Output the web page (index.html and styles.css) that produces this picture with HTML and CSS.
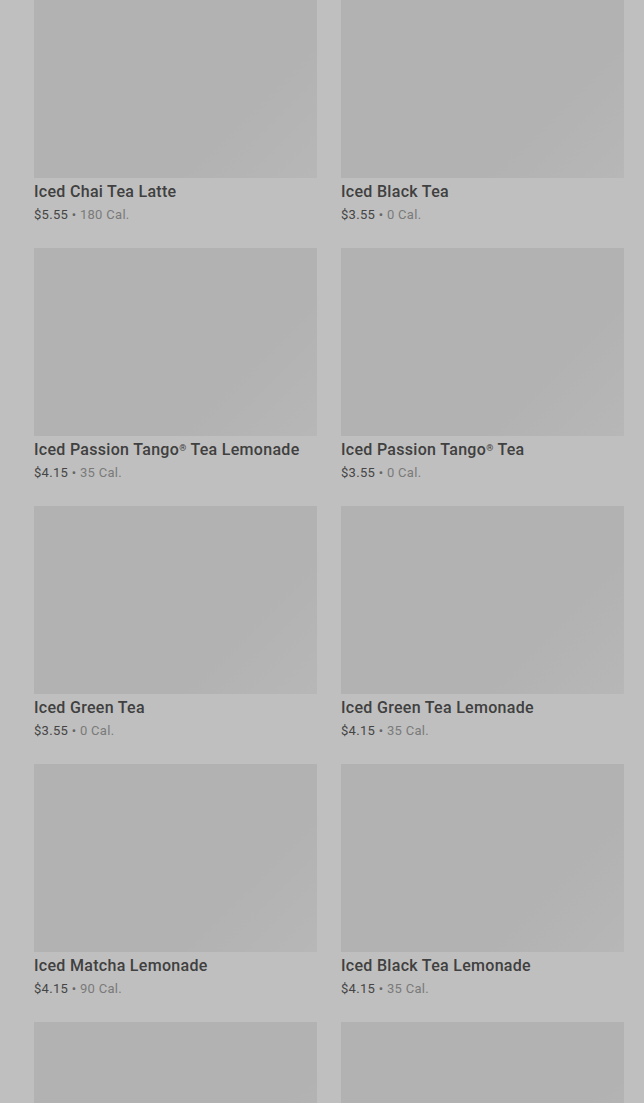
FILE: index.html
```html
<!DOCTYPE html>
<html lang="en">
<head>
    <meta charset="UTF-8">
    <meta name="viewport" content="width=device-width, initial-scale=1.0">
    <title>Iced Teas</title>
    <link rel="stylesheet" href="styles.css">
</head>
<body>
    <div class="menu-grid">
        <div class="product">
            <div class="product-image"></div>
            <div class="product-name">Iced Chai Tea Latte</div>
            <div class="product-meta"><span class="price">$5.55</span> • <span class="cal">180 Cal.</span></div>
        </div>
        <div class="product">
            <div class="product-image"></div>
            <div class="product-name">Iced Black Tea</div>
            <div class="product-meta"><span class="price">$3.55</span> • <span class="cal">0 Cal.</span></div>
        </div>
        <div class="product">
            <div class="product-image"></div>
            <div class="product-name">Iced Passion Tango<sup>®</sup> Tea Lemonade</div>
            <div class="product-meta"><span class="price">$4.15</span> • <span class="cal">35 Cal.</span></div>
        </div>
        <div class="product">
            <div class="product-image"></div>
            <div class="product-name">Iced Passion Tango<sup>®</sup> Tea</div>
            <div class="product-meta"><span class="price">$3.55</span> • <span class="cal">0 Cal.</span></div>
        </div>
        <div class="product">
            <div class="product-image"></div>
            <div class="product-name">Iced Green Tea</div>
            <div class="product-meta"><span class="price">$3.55</span> • <span class="cal">0 Cal.</span></div>
        </div>
        <div class="product">
            <div class="product-image"></div>
            <div class="product-name">Iced Green Tea Lemonade</div>
            <div class="product-meta"><span class="price">$4.15</span> • <span class="cal">35 Cal.</span></div>
        </div>
        <div class="product">
            <div class="product-image"></div>
            <div class="product-name">Iced Matcha Lemonade</div>
            <div class="product-meta"><span class="price">$4.15</span> • <span class="cal">90 Cal.</span></div>
        </div>
        <div class="product">
            <div class="product-image"></div>
            <div class="product-name">Iced Black Tea Lemonade</div>
            <div class="product-meta"><span class="price">$4.15</span> • <span class="cal">35 Cal.</span></div>
        </div>
        <div class="product">
            <div class="product-image"></div>
        </div>
        <div class="product">
            <div class="product-image"></div>
        </div>
    </div>
</body>
</html>
```

FILE: styles.css
```css
html, body {
    height: 100%;
}

body {
    margin: 0;
    background-color: #bfbfbf;
    font-family: Roboto, "Liberation Sans", sans-serif;
    overflow: hidden;
}

.menu-grid {
    display: grid;
    grid-template-columns: 283px 283px;
    column-gap: 24px;
    row-gap: 24px;
    padding: 0 20px 0 34px;
    margin-top: -10px;
}

.product-image {
    height: 188px;
    background: linear-gradient(135deg, #b2b2b2 0%, #b2b2b2 70%, #b7b7b7 100%);
}

.product-name {
    margin-top: 4px;
    font-size: 16px;
    font-weight: 500;
    line-height: 20px;
    letter-spacing: 0.3px;
    color: #404040;
}

.product-name sup {
    font-size: 9px;
    line-height: 0;
    vertical-align: 4px;
}

.product-meta {
    margin-top: 4px;
    font-size: 13px;
    line-height: 18px;
    letter-spacing: 0.3px;
    color: #666;
}

.price {
    color: #454545;
}

.cal {
    color: #7a7a7a;
}
```
